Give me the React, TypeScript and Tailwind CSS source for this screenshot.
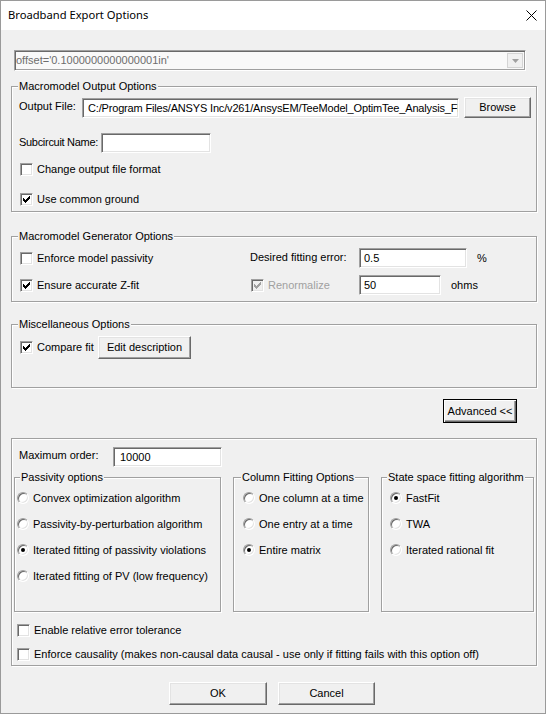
import React from "react";

const sunken =
  "border border-t-[#a0a0a0] border-l-[#a0a0a0] border-r-white border-b-white shadow-[inset_1px_1px_0_#696969,inset_-1px_-1px_0_#e3e3e3]";
const raised =
  "border border-t-white border-l-white border-r-[#696969] border-b-[#696969] shadow-[inset_-1px_-1px_0_#a0a0a0,inset_1px_1px_0_#e3e3e3]";

function CheckMark({ color }: { color: string }) {
  return (
    <svg width="7" height="7" viewBox="0 0 7 7" shapeRendering="crispEdges">
      <g fill={color}>
        <rect x="6" y="0" width="1" height="1" />
        <rect x="5" y="1" width="2" height="1" />
        <rect x="0" y="2" width="1" height="1" />
        <rect x="4" y="2" width="3" height="1" />
        <rect x="0" y="3" width="2" height="1" />
        <rect x="3" y="3" width="3" height="1" />
        <rect x="0" y="4" width="5" height="1" />
        <rect x="1" y="5" width="3" height="1" />
        <rect x="2" y="6" width="1" height="1" />
      </g>
    </svg>
  );
}

function Check({ checked, disabled }: { checked?: boolean; disabled?: boolean }) {
  return (
    <span
      className={`flex w-[13px] h-[13px] shrink-0 items-center justify-center ${sunken} ${
        disabled ? "bg-[#f0f0f0]" : "bg-white"
      }`}
    >
      {checked && <CheckMark color={disabled ? "#a0a0a0" : "#000"} />}
    </span>
  );
}

function Radio({ checked }: { checked?: boolean }) {
  return (
    <span
      className={`flex w-[12px] h-[12px] shrink-0 items-center justify-center rounded-full bg-white ${sunken}`}
    >
      {checked && <span className="w-[4px] h-[4px] rounded-full bg-black" />}
    </span>
  );
}

function CheckRow({
  label,
  checked,
  disabled,
  className = "",
}: {
  label: string;
  checked?: boolean;
  disabled?: boolean;
  className?: string;
}) {
  return (
    <div className={`flex h-[13px] items-center ${className}`}>
      <Check checked={checked} disabled={disabled} />
      <span
        className={`ml-[4px] whitespace-nowrap leading-[13px] ${
          disabled ? "text-[#a0a0a0]" : "text-black"
        }`}
      >
        {label}
      </span>
    </div>
  );
}

function RadioRow({ label, checked }: { label: string; checked?: boolean }) {
  return (
    <div className="flex h-[12px] items-center">
      <Radio checked={checked} />
      <span className="ml-[4px] whitespace-nowrap leading-[13px]">{label}</span>
    </div>
  );
}

function Group({
  label,
  labelClass = "left-[6px]",
  className = "",
  children,
}: {
  label?: string;
  labelClass?: string;
  className?: string;
  children?: React.ReactNode;
}) {
  return (
    <div
      className={`relative border border-[#a0a0a0] shadow-[inset_1px_1px_0_#fff,1px_1px_0_#fff] ${className}`}
    >
      {label && (
        <span
          className={`absolute top-[-8px] ${labelClass} bg-[#f0f0f0] px-[1px] leading-[14px] whitespace-nowrap`}
        >
          {label}
        </span>
      )}
      {children}
    </div>
  );
}

function TextBox({
  value = "",
  className = "",
  pad = "pl-[4px]",
  textClass = "",
}: {
  value?: string;
  className?: string;
  pad?: string;
  textClass?: string;
}) {
  return (
    <div
      className={`flex h-[20px] shrink-0 items-center overflow-hidden bg-white ${sunken} ${pad} ${className}`}
    >
      <span className={`whitespace-nowrap leading-[13px] pt-[1px] ${textClass}`}>{value}</span>
    </div>
  );
}

function Button({
  label,
  className = "",
}: {
  label: string;
  className?: string;
}) {
  return (
    <div
      className={`flex shrink-0 items-center justify-center bg-[#f0f0f0] ${raised} ${className}`}
    >
      <span className="whitespace-nowrap leading-[13px]">{label}</span>
    </div>
  );
}

export default function App() {
  return (
    <div className="w-[546px] h-[714px] overflow-hidden bg-[#f0f0f0] border border-[#9a9a9a] font-['Liberation_Sans',Arial,sans-serif] text-[11px] text-black">
      {/* Title bar */}
      <div className="flex h-[29px] items-center justify-between bg-white pl-[7px] pr-[8px]">
        <span className="mb-[1px] font-['Noto_Sans',sans-serif] text-[11.2px] leading-[16px]">
          Broadband Export Options
        </span>
        <svg width="11" height="11" viewBox="0 0 11 11">
          <path d="M0.5 0.5 L10.5 10.5 M10.5 0.5 L0.5 10.5" stroke="#000" strokeWidth="1" />
        </svg>
      </div>

      {/* Body */}
      <div className="flex flex-col pl-[10px] pr-[8px]">
        {/* Combo */}
        <div className="mt-[20px] ml-[3px] flex h-[21px] w-[512px] items-center border border-[#a0a0a0] border-r-white border-b-white bg-[#f9f9f9] shadow-[inset_1px_1px_0_#696969,inset_-1px_-1px_0_#a0a0a0]">
          <span className="flex-1 pl-[1px] whitespace-nowrap leading-[13px] text-[#6d6d6d]">
            offset='0.1000000000000001in'
          </span>
          <div className="mr-[2px] flex h-[15px] w-[16px] items-center justify-center border border-[#d4d4d4] bg-[#f0f0f0]">
            <svg width="7" height="4" viewBox="0 0 7 4">
              <path d="M0 0 H7 L3.5 4 Z" fill="#a0a0a0" />
            </svg>
          </div>
        </div>

        {/* Macromodel Output Options */}
        <Group label="Macromodel Output Options" className="mt-[15px] h-[126px]">
          <div className="mt-[10px] flex h-[21px] items-center">
            <span className="ml-[7px] mb-[2px] w-[63px] whitespace-nowrap">Output File:</span>
            <TextBox
              value="C:/Program Files/ANSYS Inc/v261/AnsysEM/TeeModel_OptimTee_Analysis_FI"
              className="w-[377px]"
              pad="pl-[5px]"
              textClass="tracking-[-0.17px]"
            />
            <Button label="Browse" className="ml-[5px] w-[67px] h-[21px]" />
          </div>
          <div className="mt-[15px] flex h-[20px] items-center">
            <span className="ml-[7px] mb-[2px] w-[82px] shrink-0 whitespace-nowrap tracking-[-0.3px]">
              Subcircuit Name:
            </span>
            <TextBox className="w-[110px]" />
          </div>
          <CheckRow label="Change output file format" className="mt-[10px] ml-[8px]" />
          <CheckRow label="Use common ground" checked className="mt-[17px] ml-[8px]" />
        </Group>

        {/* Macromodel Generator Options */}
        <Group label="Macromodel Generator Options" className="mt-[24px] h-[66px]">
          <div className="mt-[11px] flex h-[20px] items-center">
            <div className="ml-[8px] w-[230px]">
              <CheckRow label="Enforce model passivity" />
            </div>
            <span className="mb-[2px] w-[109px] whitespace-nowrap">Desired fitting error:</span>
            <TextBox value="0.5" className="w-[108px]" />
            <span className="ml-[10px]">%</span>
          </div>
          <div className="mt-[7px] flex h-[20px] items-center">
            <div className="ml-[8px] w-[231px]">
              <CheckRow label="Ensure accurate Z-fit" checked />
            </div>
            <div className="w-[108px]">
              <CheckRow label="Renormalize" checked disabled />
            </div>
            <TextBox value="50" className="w-[82px]" />
            <span className="ml-[10px]">ohms</span>
          </div>
        </Group>

        {/* Miscellaneous Options */}
        <Group label="Miscellaneous Options" className="mt-[22px] h-[64px]">
          <div className="mt-[11px] flex h-[23px] items-center">
            <div className="ml-[8px] w-[78px]">
              <CheckRow label="Compare fit" checked />
            </div>
            <Button label="Edit description" className="w-[93px] h-[23px]" />
          </div>
        </Group>

        {/* Advanced button */}
        <div className="mt-[11px] flex justify-end pr-[20px]">
          <div className="flex h-[24px] w-[74px] items-center justify-center border border-black bg-[#f0f0f0] shadow-[inset_1px_1px_0_#fff,inset_-1px_-1px_0_#696969,inset_-2px_-2px_0_#a0a0a0]">
            <span className="whitespace-nowrap leading-[13px]">Advanced &lt;&lt;</span>
          </div>
        </div>

        {/* Advanced group */}
        <Group className="mt-[15px] h-[228px]">
          <div className="mt-[8px] flex h-[20px] items-center">
            <span className="ml-[7px] mb-[4px] w-[94px] whitespace-nowrap">Maximum order:</span>
            <TextBox value="10000" className="w-[109px]" pad="pl-[6px]" />
          </div>
          <div className="mt-[10px] flex gap-[12px] pl-[2px]">
            <Group label="Passivity options" labelClass="left-[5px]" className="h-[135px] w-[207px]">
              <div className="mt-[14px] ml-[2px] flex flex-col gap-[14px]">
                <RadioRow label="Convex optimization algorithm" />
                <RadioRow label="Passivity-by-perturbation algorithm" />
                <RadioRow label="Iterated fitting of passivity violations" checked />
                <RadioRow label="Iterated fitting of PV (low frequency)" />
              </div>
            </Group>
            <Group label="Column Fitting Options" labelClass="left-[7px]" className="h-[135px] w-[136px]">
              <div className="mt-[14px] ml-[9px] flex flex-col gap-[14px]">
                <RadioRow label="One column at a time" />
                <RadioRow label="One entry at a time" />
                <RadioRow label="Entire matrix" checked />
              </div>
            </Group>
            <Group label="State space fitting algorithm" labelClass="left-[5px]" className="h-[135px] w-[153px]">
              <div className="mt-[14px] ml-[8px] flex flex-col gap-[14px]">
                <RadioRow label="FastFit" checked />
                <RadioRow label="TWA" />
                <RadioRow label="Iterated rational fit" />
              </div>
            </Group>
          </div>
          <CheckRow label="Enable relative error tolerance" className="mt-[12px] ml-[5px]" />
          <CheckRow
            label="Enforce causality (makes non-causal data causal - use only if fitting fails with this option off)"
            className="mt-[11px] ml-[5px]"
          />
        </Group>

        {/* OK / Cancel */}
        <div className="mt-[16px] ml-[158px] flex gap-[11px]">
          <Button label="OK" className="w-[98px] h-[23px]" />
          <Button label="Cancel" className="w-[97px] h-[23px]" />
        </div>
      </div>
    </div>
  );
}
